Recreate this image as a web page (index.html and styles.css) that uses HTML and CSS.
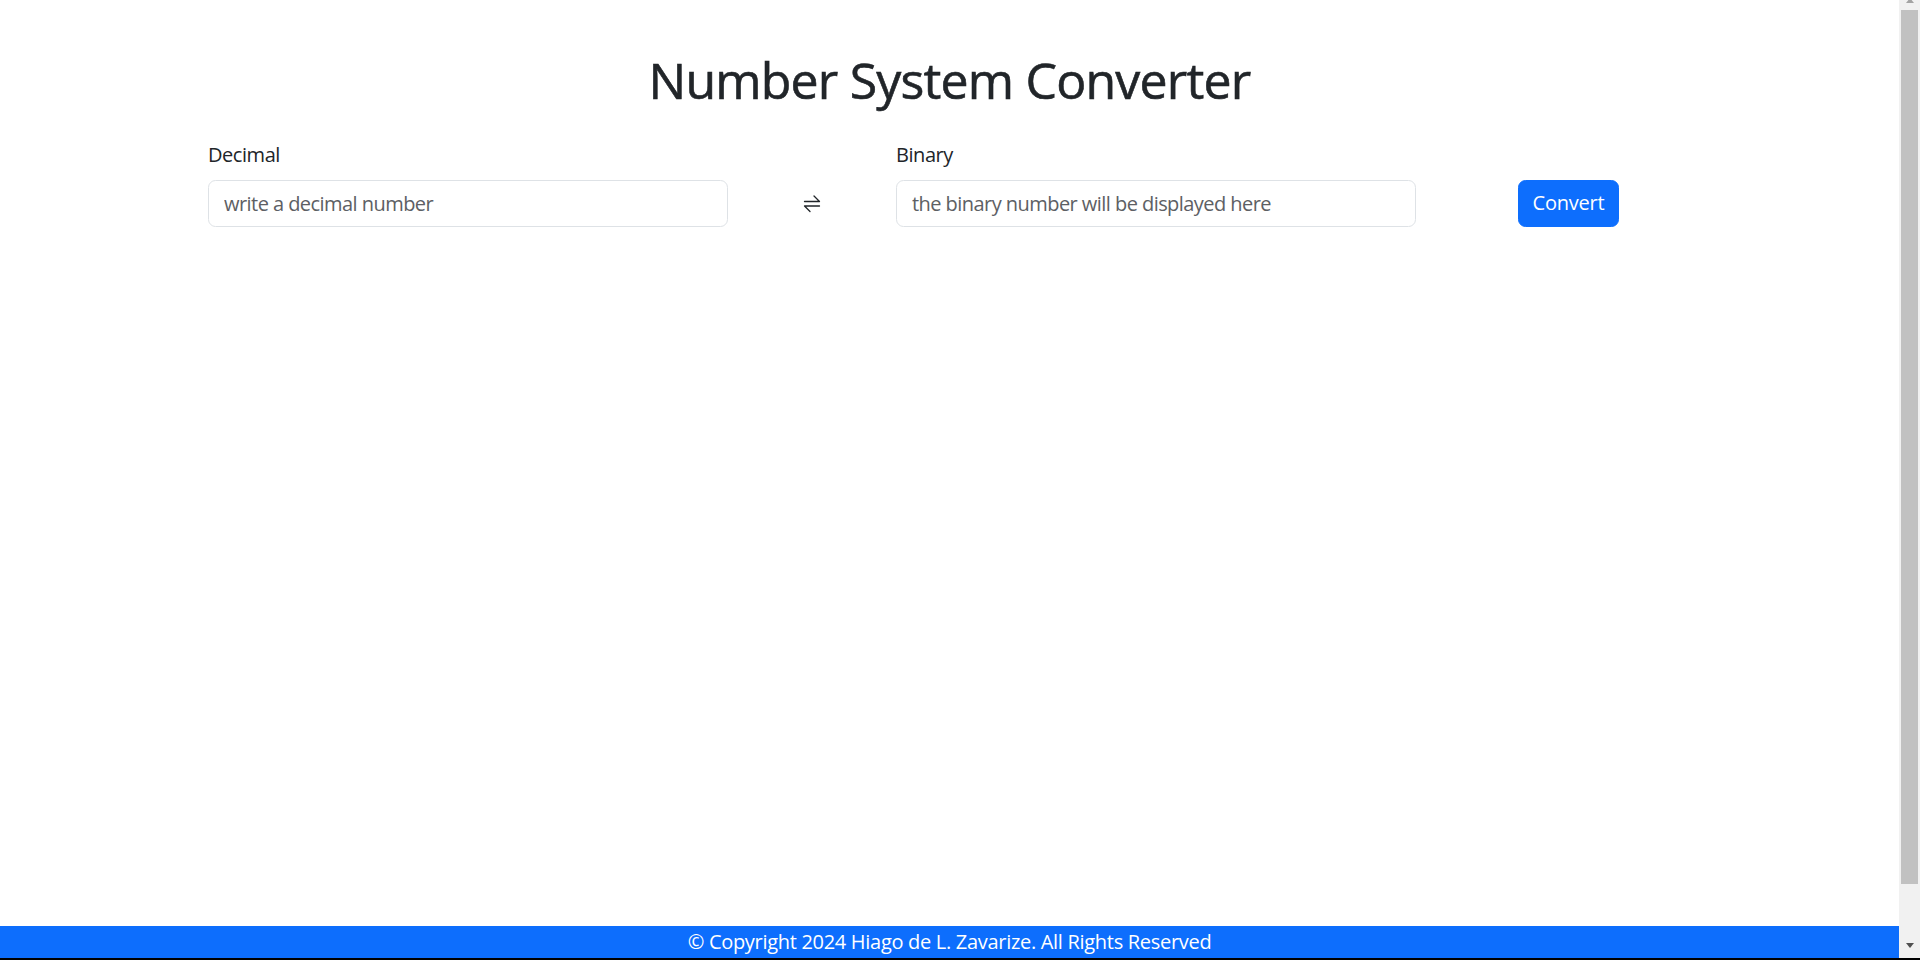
FILE: index.html
```html
<!DOCTYPE html>
<html lang="en">
<head>
<meta charset="utf-8">
<title>Number System Converter</title>
<link rel="stylesheet" href="styles.css">
</head>
<body>
  <div class="frame">
    <div class="viewport">
      <main class="page">
        <h1 class="title">Number System Converter</h1>
        <div class="converter">
          <div class="field">
            <label class="label" for="from">Decimal</label>
            <input class="control" id="from" type="text" placeholder="write a decimal number">
          </div>
          <div class="swap">
            <svg class="swap-icon" width="18" height="20" viewBox="0 0 18 20" fill="none" stroke="#212529" stroke-width="1.3" stroke-linecap="round" stroke-linejoin="round">
              <path d="M1.5 8.5 H16.5 L11 3"/>
              <path d="M16.5 13 H1.5 L7 18.5"/>
            </svg>
          </div>
          <div class="field">
            <label class="label" for="to">Binary</label>
            <input class="control" id="to" type="text" placeholder="the binary number will be displayed here" readonly>
          </div>
          <div class="action">
            <button class="btn" type="button">Convert</button>
          </div>
        </div>
      </main>
      <footer class="footer">© Copyright 2024 Hiago de L. Zavarize. All Rights Reserved</footer>
    </div>
    <div class="scrollbar">
      <div class="sb-up"><span class="tri-up"></span></div>
      <div class="sb-thumb"></div>
      <div class="sb-rest"></div>
      <div class="sb-down"><span class="tri-down"></span></div>
    </div>
  </div>
  <div class="edge"></div>
</body>
</html>
```

FILE: styles.css
```css
* { box-sizing: border-box; }

html, body {
  margin: 0;
  padding: 0;
  height: 100%;
}

body {
  display: flex;
  flex-direction: column;
  height: 960px;
  overflow: hidden;
  background: #ffffff;
  color: #212529;
  font-family: "Open Sans", "Noto Sans", "Liberation Sans", sans-serif;
}

.frame {
  flex: 1;
  display: flex;
  min-height: 0;
}

.viewport {
  flex: 1;
  display: flex;
  flex-direction: column;
  min-width: 0;
}

.page {
  flex: 1;
}

.title {
  margin: 49.6px 0 0;
  font-size: 50px;
  line-height: 60px;
  font-weight: 400;
  text-align: center;
  color: #212529;
  letter-spacing: -0.8px;
  -webkit-text-stroke: 0.6px #212529;
}

.converter {
  display: flex;
  align-items: flex-end;
  margin-top: 30.5px;
  padding-left: 208px;
}

.field {
  width: 520px;
  display: flex;
  flex-direction: column;
}

.label {
  font-size: 20px;
  line-height: 30px;
  margin-bottom: 10px;
  color: #212529;
  letter-spacing: -0.45px;
}

.control {
  height: 46.5px;
  width: 100%;
  padding: 7.5px 15px;
  font: inherit;
  font-size: 20px;
  line-height: 30px;
  letter-spacing: -0.55px;
  color: #212529;
  background: #ffffff;
  border: 1px solid #dee2e6;
  border-radius: 7.5px;
  outline: none;
}

.control::placeholder {
  color: #5d6064;
  opacity: 1;
}

.swap {
  width: 168px;
  height: 46.5px;
  display: flex;
  align-items: center;
  justify-content: center;
}

.swap-icon {
  display: block;
}

.action {
  margin-left: 102px;
}

.btn {
  height: 46.5px;
  width: 101px;
  padding: 0;
  font: inherit;
  font-size: 20px;
  line-height: 30px;
  letter-spacing: -0.2px;
  color: #ffffff;
  background: #0d6efd;
  border: 1px solid #0d6efd;
  border-radius: 7.5px;
  cursor: pointer;
}

.footer {
  height: 32px;
  line-height: 32px;
  background: #0d6efd;
  color: #ffffff;
  font-size: 20px;
  letter-spacing: -0.3px;
  text-align: center;
}

.scrollbar {
  width: 21px;
  background: #f1f1f1;
  display: flex;
  flex-direction: column;
  align-items: center;
}

.sb-up {
  height: 10px;
  width: 100%;
  display: flex;
  justify-content: center;
  align-items: flex-start;
  overflow: hidden;
}

.tri-up {
  display: block;
  margin-top: -2px;
  width: 0;
  height: 0;
  border-left: 4.5px solid transparent;
  border-right: 4.5px solid transparent;
  border-bottom: 5px solid #a3a3a3;
}

.sb-thumb {
  width: 17px;
  height: 874px;
  background: #c1c1c1;
}

.sb-rest {
  flex: 1;
}

.sb-down {
  height: 20px;
  width: 100%;
  display: flex;
  justify-content: center;
  align-items: flex-start;
  padding-top: 5px;
}

.tri-down {
  display: block;
  width: 0;
  height: 0;
  border-left: 4.5px solid transparent;
  border-right: 4.5px solid transparent;
  border-top: 5px solid #505050;
}

.edge {
  height: 2px;
  background: #000000;
}
```
